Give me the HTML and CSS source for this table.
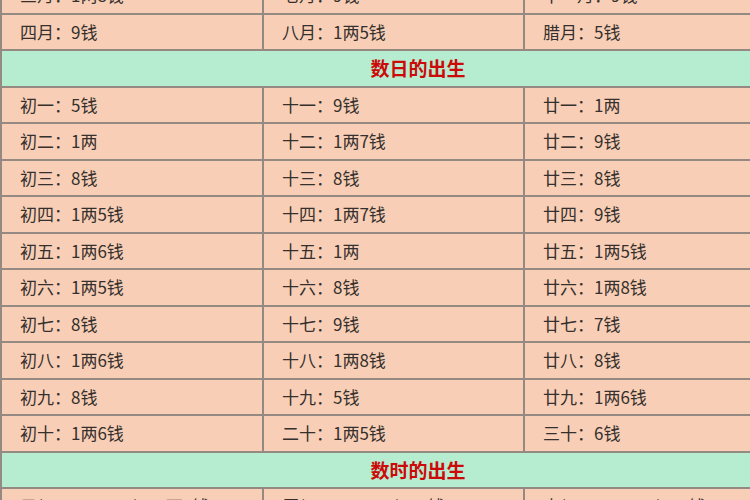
FILE: index.html
```html
<!DOCTYPE html>
<html lang="zh">
<head>
<meta charset="utf-8">
<link rel="stylesheet" href="styles.css">
</head>
<body>
<table class="bone">
  <colgroup><col class="c1"><col class="c2"><col class="c3"></colgroup>
  <tr><td>三月：1两8钱</td><td>七月：9钱</td><td>十一月：9钱</td></tr>
  <tr><td>四月：9钱</td><td>八月：1两5钱</td><td>腊月：5钱</td></tr>
  <tr class="head"><td colspan="3">数日的出生</td></tr>
  <tr><td>初一：5钱</td><td>十一：9钱</td><td>廿一：1两</td></tr>
  <tr><td>初二：1两</td><td>十二：1两7钱</td><td>廿二：9钱</td></tr>
  <tr><td>初三：8钱</td><td>十三：8钱</td><td>廿三：8钱</td></tr>
  <tr><td>初四：1两5钱</td><td>十四：1两7钱</td><td>廿四：9钱</td></tr>
  <tr><td>初五：1两6钱</td><td>十五：1两</td><td>廿五：1两5钱</td></tr>
  <tr><td>初六：1两5钱</td><td>十六：8钱</td><td>廿六：1两8钱</td></tr>
  <tr><td>初七：8钱</td><td>十七：9钱</td><td>廿七：7钱</td></tr>
  <tr><td>初八：1两6钱</td><td>十八：1两8钱</td><td>廿八：8钱</td></tr>
  <tr><td>初九：8钱</td><td>十九：5钱</td><td>廿九：1两6钱</td></tr>
  <tr><td>初十：1两6钱</td><td>二十：1两5钱</td><td>三十：6钱</td></tr>
  <tr class="head"><td colspan="3">数时的出生</td></tr>
  <tr><td>子(23:00-01:00)：1两6钱</td><td>辰(07:00-09:00)：9钱</td><td>申(15:00-17:00)：8钱</td></tr>
</table>
</body>
</html>
```
FILE: styles.css
```css
html, body {
  margin: 0;
  padding: 0;
  overflow: hidden;
  background: #f7cfb7;
}
.bone {
  border-collapse: collapse;
  width: 836px;
  margin-top: -24px;
  margin-left: 0;
  table-layout: fixed;
  font-family: "Noto Sans CJK SC", "Liberation Sans", sans-serif;
  font-size: 17px;
  color: #35302d;
}
.c1 { width: 262px; }
.c2 { width: 261px; }
.bone td {
  height: 36.5px;
  padding: 0 0 0 18px;
  border: 2px solid #958a82;
  background: #f8cfb6;
  white-space: nowrap;
  box-sizing: border-box;
  line-height: 20px;
}
.bone tr.head td {
  background: #b6ecd0;
  text-align: center;
  padding: 0;
  color: #cc0a0a;
  font-weight: bold;
  font-size: 19px;
}
```
